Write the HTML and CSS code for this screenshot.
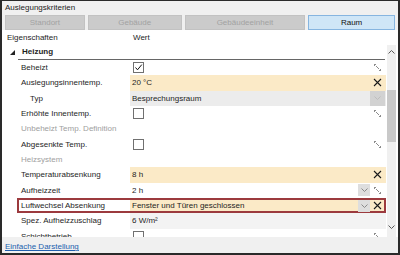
FILE: index.html
```html
<!DOCTYPE html>
<html lang="de">
  <head>
    <meta charset="UTF-8" />
    <title>Auslegungskriterien</title>
    <link rel="stylesheet" href="styles.css">
  </head>
  <body>
    <div class="window">
      <div class="title">Auslegungskriterien</div>

      <div class="tabs">
        <div class="tab tab-standort">Standort</div>
        <div class="tab tab-gebaeude">Gebäude</div>
        <div class="tab tab-einheit">Gebäudeeinheit</div>
        <div class="tab tab-raum active">Raum</div>
      </div>

      <div class="grid">
        <div class="grid-head">
          <div class="label">Eigenschaften</div>
          <div class="value">Wert</div>
        </div>

        <div class="grid-body">
          <div class="rows">
            <div class="group">
              <span class="caret"><svg viewBox="0 0 5 5" width="5" height="5"><path d="M5 0V5H0z" fill="#222"/></svg></span>
              <span class="group-title">Heizung</span>
            </div>

            <div class="row">
              <div class="label">Beheizt</div>
              <div class="value">
                <span class="check"><svg viewBox="0 0 11 11" width="11" height="11"><path d="M2.5 5.5L4.5 7.8L8.8 2.6" fill="none" stroke="#111" stroke-width="1"/></svg></span>
                <span class="ico"><svg viewBox="0 0 9 9" width="9" height="9"><path d="M1 1h2v1H2v1H1zM3 3h1v1H3zM4 4h1v1H4zM5 5h1v1H5zM7 6h1v2H6V7h1z" fill="#8c8c8c"/></svg></span>
              </div>
            </div>

            <div class="row">
              <div class="label">Auslegungsinnentemp.</div>
              <div class="value changed">
                <span class="text">20 °C</span>
                <span class="ico"><svg viewBox="0 0 9 9" width="9" height="9"><path d="M1 1L8 8M8 1L1 8" stroke="#1a1a1a" stroke-width="1.1"/></svg></span>
              </div>
            </div>

            <div class="row row-typ">
              <div class="label sub">Typ</div>
              <div class="value readonly">
                <span class="text">Besprechungsraum</span>
                <span class="dd-box"><svg viewBox="0 0 7 4" width="7" height="4"><path d="M0.5 0.5L3.5 3.5L6.5 0.5" fill="none" stroke="#bdbdbd"/></svg></span>
              </div>
            </div>

            <div class="row">
              <div class="label">Erhöhte Innentemp.</div>
              <div class="value">
                <span class="check"></span>
                <span class="ico"><svg viewBox="0 0 9 9" width="9" height="9"><path d="M1 1h2v1H2v1H1zM3 3h1v1H3zM4 4h1v1H4zM5 5h1v1H5zM7 6h1v2H6V7h1z" fill="#8c8c8c"/></svg></span>
              </div>
            </div>

            <div class="row">
              <div class="label muted">Unbeheizt Temp. Definition</div>
              <div class="value"></div>
            </div>

            <div class="row">
              <div class="label">Abgesenkte Temp.</div>
              <div class="value">
                <span class="check"></span>
                <span class="ico"><svg viewBox="0 0 9 9" width="9" height="9"><path d="M1 1h2v1H2v1H1zM3 3h1v1H3zM4 4h1v1H4zM5 5h1v1H5zM7 6h1v2H6V7h1z" fill="#8c8c8c"/></svg></span>
              </div>
            </div>

            <div class="row">
              <div class="label muted">Heizsystem</div>
              <div class="value"></div>
            </div>

            <div class="row">
              <div class="label">Temperaturabsenkung</div>
              <div class="value changed">
                <span class="text">8 h</span>
                <span class="ico"><svg viewBox="0 0 9 9" width="9" height="9"><path d="M1 1L8 8M8 1L1 8" stroke="#1a1a1a" stroke-width="1.1"/></svg></span>
              </div>
            </div>

            <div class="row">
              <div class="label">Aufheizzeit</div>
              <div class="value">
                <span class="text">2 h</span>
                <span class="dd"><svg viewBox="0 0 7 4" width="7" height="4"><path d="M0.5 0.5L3.5 3.5L6.5 0.5" fill="none" stroke="#8a8a8a"/></svg></span>
                <span class="ico"><svg viewBox="0 0 9 9" width="9" height="9"><path d="M1 1h2v1H2v1H1zM3 3h1v1H3zM4 4h1v1H4zM5 5h1v1H5zM7 6h1v2H6V7h1z" fill="#8c8c8c"/></svg></span>
              </div>
            </div>

            <div class="row row-focus">
              <div class="label">Luftwechsel Absenkung</div>
              <div class="value changed">
                <span class="text">Fenster und Türen geschlossen</span>
                <span class="dd"><svg viewBox="0 0 7 4" width="7" height="4"><path d="M0.5 0.5L3.5 3.5L6.5 0.5" fill="none" stroke="#8a8a8a"/></svg></span>
                <span class="ico"><svg viewBox="0 0 9 9" width="9" height="9"><path d="M1 1L8 8M8 1L1 8" stroke="#1a1a1a" stroke-width="1.1"/></svg></span>
              </div>
            </div>

            <div class="row">
              <div class="label">Spez. Aufheizzuschlag</div>
              <div class="value readonly-light">
                <span class="text">6 W/m²</span>
              </div>
            </div>

            <div class="row">
              <div class="label">Schichtbetrieb</div>
              <div class="value">
                <span class="check"></span>
                <span class="ico"><svg viewBox="0 0 9 9" width="9" height="9"><path d="M1 1h2v1H2v1H1zM3 3h1v1H3zM4 4h1v1H4zM5 5h1v1H5zM7 6h1v2H6V7h1z" fill="#8c8c8c"/></svg></span>
              </div>
            </div>
          </div>

          <div class="scrollbar">
            <div class="sb-btn"><svg viewBox="0 0 7 4" width="7" height="4"><path d="M0.5 3.5L3.5 0.5L6.5 3.5" fill="none" stroke="#5a5a5a"/></svg></div>
            <div class="sb-track"><div class="sb-thumb"></div></div>
            <div class="sb-btn sb-down"><svg viewBox="0 0 7 4" width="7" height="4"><path d="M0.5 0.5L3.5 3.5L6.5 0.5" fill="none" stroke="#5a5a5a"/></svg></div>
          </div>
        </div>
      </div>

      <div class="footer"><a href="#">Einfache Darstellung</a></div>
    </div>
  </body>
</html>
```

FILE: styles.css
```css
* {
  box-sizing: border-box;
}

body {
  margin: 0;
  font-family: "Liberation Sans", Arial, sans-serif;
  font-size: 8px;
  color: #1e1e1e;
  background: #fff;
}

.window {
  width: 400px;
  height: 255px;
  border: 2px solid #2a2a2a;
  border-top-width: 1px;
  background: #f0f0f0;
  display: flex;
  flex-direction: column;
}

.title {
  height: 13px;
  line-height: 13px;
  padding-left: 3px;
  color: #222;
}

.tabs {
  display: flex;
  gap: 3px;
  height: 15px;
  margin-top: 1px;
  padding: 0 3px;
}

.tab {
  border: 1px solid #c2c2c2;
  background: #cbcbcb;
  color: #a2a2a2;
  text-align: center;
  line-height: 13px;
}

.tab-standort { width: 80px; }
.tab-gebaeude { width: 94px; }
.tab-einheit { width: 121px; }
.tab-raum { width: 87px; }

.tab.active {
  background: #cfe6f7;
  border-color: #86b5e0;
  color: #111;
}

.grid {
  background: #fff;
  display: flex;
  flex-direction: column;
}

.grid-head {
  display: flex;
  height: 15px;
  line-height: 15px;
}

.grid-head .label {
  width: 128px;
  padding-left: 5px;
}

.grid-head .value {
  padding-left: 3px;
}

.grid-body {
  display: flex;
  height: 192px;
}

.rows {
  flex: 1;
  overflow: hidden;
}

.group {
  display: flex;
  height: 15px;
  margin-right: 1px;
}

.caret {
  width: 16px;
  padding: 5px 0 0 8px;
}

.caret svg {
  display: block;
}

.group-title {
  flex: 1;
  padding-left: 4px;
  font-weight: bold;
  line-height: 14px;
  border-bottom: 1px solid #666;
}

.row {
  display: flex;
  height: calc(46px / 3);
}

.row .label {
  width: 128px;
  padding-left: 19px;
  display: flex;
  align-items: center;
  white-space: nowrap;
}

.row .label.sub {
  padding-left: 28px;
}

.row .label.muted {
  color: #a0a0a0;
}

.row .value {
  flex: 1;
  display: flex;
  align-items: center;
  padding: 0 4px 0 2px;
  white-space: nowrap;
}

.value .text {
  flex: 1;
}

.value.changed {
  background: #fbeac7;
}

.value.readonly {
  background: #ececec;
}

.value.readonly-light {
  background: #f3f3f3;
}

.check {
  width: 11px;
  height: 11px;
  margin-left: 1px;
  margin-right: auto;
  border: 1px solid #707070;
  background: #fff;
  position: relative;
}

.check svg {
  position: absolute;
  left: -1px;
  top: -1px;
}

.ico {
  width: 9px;
  height: 9px;
  display: flex;
}

.dd {
  width: 12px;
  height: 12px;
  margin-right: 3px;
  background: #dedede;
  display: flex;
  align-items: center;
  justify-content: center;
}

.row-typ .value {
  padding-right: 1px;
}

.dd-box {
  width: 15px;
  align-self: stretch;
  background: #d2d2d2;
  display: flex;
  align-items: center;
  justify-content: center;
}

.row-focus {
  margin-left: 15px;
  border: 2px solid #9c3a3e;
}

.row-focus .label {
  width: 111px;
  padding-left: 2px;
}

.row-focus .value {
  padding-right: 2px;
}

.scrollbar {
  width: 12px;
  padding: 0 2px 0 1px;
  display: flex;
  flex-direction: column;
  background: #fff;
}

.sb-btn {
  height: 14px;
  background: #f0f0f0;
  display: flex;
  align-items: center;
  justify-content: center;
}

.sb-down {
  height: 16px;
  align-items: flex-start;
  padding-top: 4px;
}

.sb-track {
  flex: 1;
  background: #f0f0f0;
}

.sb-thumb {
  margin-top: 31px;
  height: 52px;
  background: #c9c9c9;
}

.footer {
  flex: 1;
  padding: 3px 0 0 3px;
  line-height: 13px;
}

.footer a {
  color: #2160ae;
  text-decoration: underline;
}
```
